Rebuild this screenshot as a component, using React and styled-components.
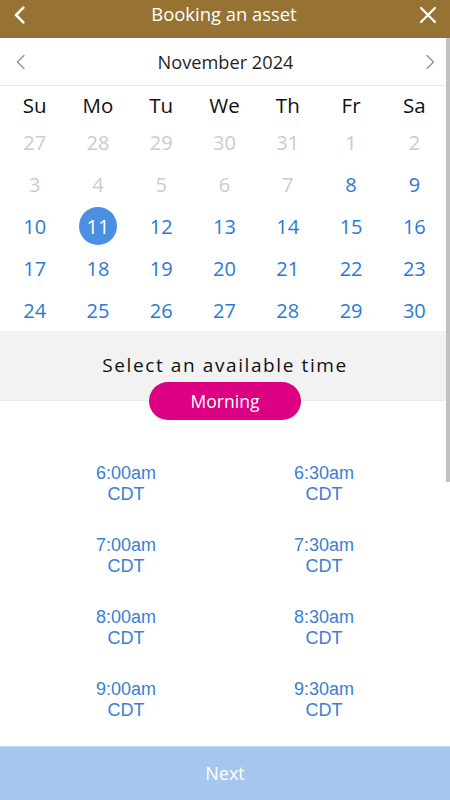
import React from "react";
import styled, { createGlobalStyle } from "styled-components";

const GlobalStyle = createGlobalStyle`
  html, body {
    margin: 0;
    padding: 0;
    height: 100%;
    background: #ffffff;
  }
  * {
    box-sizing: border-box;
  }
`;

const Screen = styled.div`
  display: flex;
  flex-flow: column;
  height: 100vh;
  font-family: "Open Sans", "Noto Sans", sans-serif;
  overflow: hidden;
`;

const TopBar = styled.header`
  flex: 0 0 38px;
  display: flex;
  align-items: center;
  justify-content: space-between;
  padding: 0 12px 0 10px;
  background: #967333;
  color: #ffffff;
`;

const TopTitle = styled.h1`
  margin: 0;
  font-size: 18.4px;
  font-weight: 400;
  line-height: 1;
  padding-bottom: 10px;
`;

const IconButton = styled.button`
  display: flex;
  align-items: center;
  justify-content: center;
  width: ${({ size }) => size}px;
  height: ${({ size }) => size}px;
  padding: 0;
  margin-bottom: ${({ lift }) => lift || 0}px;
  border: none;
  background: none;
  cursor: pointer;
`;

const ScrollArea = styled.div`
  flex: 1;
  min-height: 0;
  position: relative;
`;

const Scroller = styled.main`
  height: 100%;
  overflow-y: auto;
  scrollbar-width: none;
`;

const ScrollThumb = styled.div`
  position: absolute;
  top: 0;
  right: 0;
  width: 4px;
  height: 444px;
  background: #c1c1c1;
`;

const MonthNav = styled.div`
  height: 48px;
  display: flex;
  align-items: center;
  justify-content: space-between;
  padding: 0 12px 0 13px;
  border-bottom: 1px solid #e3e8ec;
`;

const MonthLabel = styled.span`
  font-size: 18.2px;
  color: #1f1f1f;
`;

const Calendar = styled.div`
  display: grid;
  grid-template-columns: repeat(7, 1fr);
  grid-template-rows: 32px;
  grid-auto-rows: 42px;
  padding: 3px 4px 0 3px;
`;

const WeekDay = styled.div`
  display: flex;
  align-items: center;
  justify-content: center;
  font-size: 20.5px;
  color: #111111;
`;

const DayCell = styled.div`
  display: flex;
  align-items: center;
  justify-content: center;
`;

const Day = styled.span`
  width: 38px;
  height: 38px;
  border-radius: 50%;
  display: flex;
  align-items: center;
  justify-content: center;
  font-size: 20px;
  color: ${({ selected, muted }) =>
    selected ? "#ffffff" : muted ? "#c6cdd3" : "#2a7ad4"};
  background: ${({ selected }) => (selected ? "#4a8fe2" : "transparent")};
`;

const TimeHeader = styled.section`
  display: flex;
  flex-flow: column;
  align-items: center;
  padding-top: 21px;
  height: 70px;
  background: #f2f2f2;
  border-bottom: 1px solid #e5edf4;
`;

const TimeTitle = styled.h2`
  margin: 0;
  font-size: 19px;
  font-weight: 400;
  letter-spacing: 1.6px;
  line-height: 26px;
  color: #111111;
`;

const Pill = styled.button`
  flex-shrink: 0;
  width: 152px;
  height: 38px;
  margin-top: 4px;
  border: none;
  border-radius: 19px;
  background: #dc0082;
  color: #ffffff;
  font-family: inherit;
  font-size: 17.5px;
  position: relative;
  z-index: 1;
`;

const Slots = styled.div`
  display: grid;
  grid-template-columns: 198px 198px;
  justify-content: center;
  row-gap: 30px;
  padding: 62px 0 330px;
`;

const Slot = styled.button`
  border: none;
  background: none;
  padding: 0;
  font-family: "Liberation Sans", Arial, sans-serif;
  font-size: 18px;
  line-height: 21px;
  color: #3a7fd3;
  text-align: center;
`;

const Footer = styled.button`
  flex: 0 0 54px;
  border: none;
  border-top: 1px solid #c4daf4;
  background: #a4c6ef;
  color: #ffffff;
  font-family: inherit;
  font-size: 18px;
  padding-bottom: 2px;
`;

const Chevron = ({ dir, size, stroke, width }) => (
  <svg width={size} height={size} viewBox="0 0 16 16" fill="none">
    <path
      d={dir === "left" ? "M11 1.5 L4.5 8 L11 14.5" : "M5 1.5 L11.5 8 L5 14.5"}
      stroke={stroke}
      strokeWidth={width}
      strokeLinecap="round"
      strokeLinejoin="round"
    />
  </svg>
);

const CloseIcon = () => (
  <svg width="18" height="18" viewBox="0 0 18 18" fill="none">
    <path d="M2 2 L16 16 M16 2 L2 16" stroke="#ffffff" strokeWidth="2.2" strokeLinecap="round" />
  </svg>
);

const weekDays = ["Su", "Mo", "Tu", "We", "Th", "Fr", "Sa"];

const days = [
  [27, true], [28, true], [29, true], [30, true], [31, true], [1, true], [2, true],
  [3, true], [4, true], [5, true], [6, true], [7, true], [8], [9],
  [10], [11], [12], [13], [14], [15], [16],
  [17], [18], [19], [20], [21], [22], [23],
  [24], [25], [26], [27], [28], [29], [30],
];

const times = [
  "6:00am", "6:30am", "7:00am", "7:30am", "8:00am", "8:30am",
  "9:00am", "9:30am", "10:00am", "10:30am", "11:00am", "11:30am",
];

export default function App() {
  return (
    <>
      <GlobalStyle />
      <Screen>
        <TopBar>
          <IconButton size={20} lift={8}>
            <Chevron dir="left" size={18} stroke="#ffffff" width={2.2} />
          </IconButton>
          <TopTitle>Booking an asset</TopTitle>
          <IconButton size={20} lift={8}>
            <CloseIcon />
          </IconButton>
        </TopBar>
        <ScrollArea>
          <Scroller>
            <MonthNav>
              <IconButton size={16}>
                <Chevron dir="left" size={16} stroke="#8a9299" width={1.3} />
              </IconButton>
              <MonthLabel>November 2024</MonthLabel>
              <IconButton size={16}>
                <Chevron dir="right" size={16} stroke="#8a9299" width={1.3} />
              </IconButton>
            </MonthNav>
            <Calendar>
              {weekDays.map((d) => (
                <WeekDay key={d}>{d}</WeekDay>
              ))}
              {days.map(([n, muted], i) => (
                <DayCell key={i}>
                  <Day muted={muted} selected={!muted && n === 11}>
                    {n}
                  </Day>
                </DayCell>
              ))}
            </Calendar>
            <TimeHeader>
              <TimeTitle>Select an available time</TimeTitle>
              <Pill>Morning</Pill>
            </TimeHeader>
            <Slots>
              {times.map((t) => (
                <Slot key={t}>
                  {t}
                  <br />
                  CDT
                </Slot>
              ))}
            </Slots>
          </Scroller>
          <ScrollThumb />
        </ScrollArea>
        <Footer>Next</Footer>
      </Screen>
    </>
  );
}
